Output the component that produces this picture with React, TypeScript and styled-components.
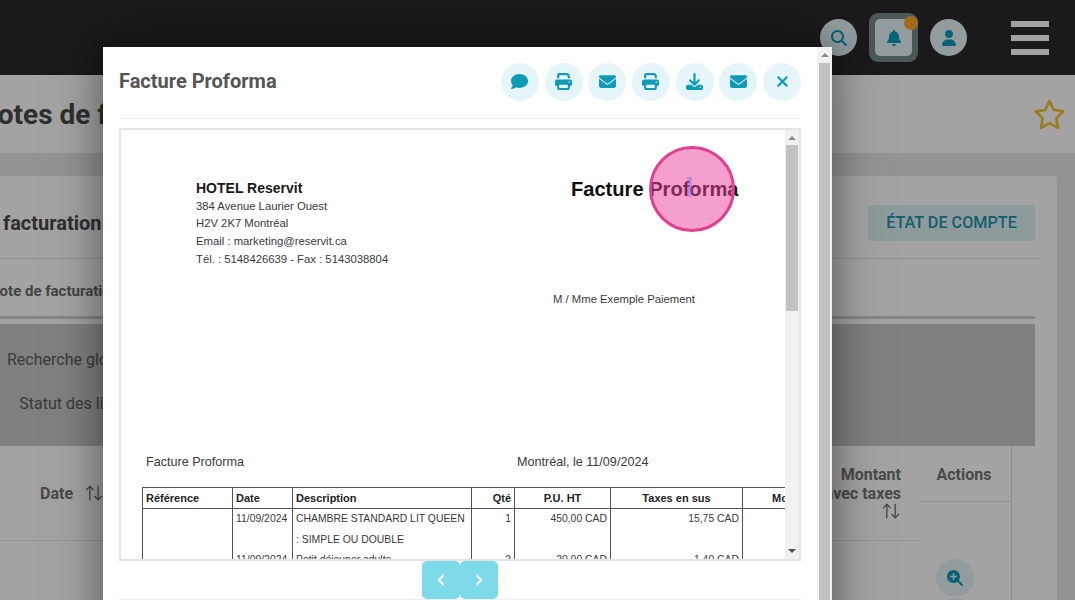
import React from "react";
import styled, { createGlobalStyle } from "styled-components";
import {
  FaBell,
  FaComment,
  FaDownload,
  FaEnvelope,
  FaMagnifyingGlass,
  FaMagnifyingGlassPlus,
  FaPrint,
  FaRegStar,
  FaUser,
  FaXmark,
} from "react-icons/fa6";
import { ArrowUpDown, ChevronLeft, ChevronRight } from "lucide-react";

const GlobalStyle = createGlobalStyle`
  html, body {
    margin: 0;
    padding: 0;
    overflow: hidden;
    font-family: Roboto, "Liberation Sans", sans-serif;
  }
  * {
    box-sizing: border-box;
  }
`;

const Screen = styled.div`
  position: relative;
  width: 1075px;
  height: 600px;
  overflow: hidden;
  background: #e6e6e6;
`;

/* page behind the modal */
const TopBar = styled.header`
  height: 75px;
  background: #292929;
  display: flex;
  align-items: center;
  justify-content: flex-end;
  padding-right: 26px;
`;

const TopCircle = styled.div`
  width: 37px;
  height: 37px;
  border-radius: 50%;
  background: #e6f6f9;
  color: #0f9ab8;
  display: flex;
  align-items: center;
  justify-content: center;
  font-size: 16px;
`;

const BellFrame = styled.div`
  position: relative;
  width: 49px;
  height: 49px;
  margin: 0 12px;
  padding: 6px;
  border-radius: 9px;
  background: #78898d;
`;

const BellInner = styled.div`
  width: 37px;
  height: 37px;
  border-radius: 5px;
  background: #e6f6f9;
  color: #0f9ab8;
  display: flex;
  align-items: center;
  justify-content: center;
  font-size: 16px;
`;

const BellDot = styled.span`
  position: absolute;
  top: 3px;
  right: 0;
  width: 14px;
  height: 14px;
  border-radius: 50%;
  background: #fbaa25;
`;

const Burger = styled.div`
  width: 38px;
  margin-left: 44px;
  display: flex;
  flex-direction: column;
  gap: 8px;
`;

const BurgerBar = styled.span`
  height: 6px;
  background: #ffffff;
`;

const TitleBand = styled.div`
  height: 78px;
  background: #ffffff;
  display: flex;
  align-items: center;
  justify-content: space-between;
  padding: 0 9px 0 0;
  margin-left: -22px;
`;

const PageTitle = styled.h1`
  margin: 0;
  font-size: 28px;
  font-weight: 700;
  color: #4a4a4a;
`;

const Star = styled.div`
  color: #f2c230;
  font-size: 33px;
  display: flex;
`;

const Card = styled.section`
  width: 1147px;
  margin: 23px 0 0 -90px;
  background: #ffffff;
  padding-right: 22px;
  border-radius: 4px;
`;

const CardHead = styled.div`
  height: 83px;
  margin-right: -5px;
  padding: 11px 5px 0 18px;
  display: flex;
  align-items: center;
  justify-content: space-between;
  border-bottom: 1px solid #e4e4e4;
`;

const CardTitle = styled.h2`
  margin: 0;
  font-size: 20px;
  font-weight: 700;
  color: #4a4a4a;
`;

const AccountButton = styled.div`
  width: 167px;
  height: 36px;
  border-radius: 4px;
  background: #dff3f6;
  color: #1f93ab;
  font-size: 16.2px;
  font-weight: 500;
  display: flex;
  align-items: center;
  justify-content: center;
`;

const TabRow = styled.div`
  height: 60px;
  padding: 23px 0 0 79px;
  font-size: 15px;
  font-weight: 700;
  color: #6a6a6a;
  border-bottom: 3px solid #d2d2d2;
`;

const FilterPanel = styled.div`
  height: 122px;
  margin-top: 5px;
  background: #c8c8c8;
  padding: 18px 0 0 58px;
  display: flex;
  flex-direction: column;
  gap: 8px;
`;

const FilterLabel = styled.div`
  width: 170px;
  height: 36px;
  line-height: 36px;
  font-size: 16px;
  color: #5c5c5c;
  text-align: right;
`;

const TableArea = styled.div`
  width: 1102px;
  height: 160px;
  display: flex;
  border-right: 1px solid #e0e0e0;
`;

const MainColumn = styled.div`
  flex: 1;
`;

const HeaderRow = styled.div`
  height: 95px;
  padding: 19px 19px 0 130px;
  display: flex;
  justify-content: space-between;
  border-bottom: 1px solid #e4e4e4;
`;

const SortLabel = styled.div`
  display: flex;
  align-items: center;
  gap: 11px;
  height: 56px;
  font-size: 16px;
  font-weight: 700;
  color: #737373;
`;

const AmountHead = styled.div`
  width: 90px;
  display: flex;
  flex-direction: column;
  align-items: flex-end;
  text-align: right;
  font-size: 16px;
  line-height: 19px;
  font-weight: 700;
  color: #737373;

  svg {
    margin-top: -2px;
  }
`;

const SortIcon = styled(ArrowUpDown)`
  color: #737373;
`;

const ActionsColumn = styled.div`
  width: 91px;
  display: flex;
  flex-direction: column;
`;

const ActionsHead = styled.div`
  flex: none;
  height: 56px;
  padding: 19px 3px 0 0;
  text-align: center;
  font-size: 16px;
  font-weight: 700;
  color: #737373;
  border-bottom: 1px solid #e4e4e4;
`;

const ActionsBody = styled.div`
  flex: none;
  padding: 57px 22px 0 0;
  display: flex;
  flex-direction: column;
  align-items: center;
  gap: 1px;
`;

const ZoomCircle = styled.div`
  flex: none;
  width: 38px;
  height: 38px;
  border-radius: 50%;
  background: #e5f5f8;
  color: #0f9ab8;
  display: flex;
  align-items: center;
  justify-content: center;
  font-size: 16px;
`;

const Backdrop = styled.div`
  position: absolute;
  inset: 0;
  background: rgba(0, 0, 0, 0.36);
`;

/* modal */
const Modal = styled.div`
  position: absolute;
  left: 103px;
  top: 47px;
  width: 729px;
  height: 620px;
  background: #ffffff;
  display: flex;
  box-shadow: 0 0 45px rgba(0, 0, 0, 0.5);
`;

const ModalBody = styled.div`
  flex: 1;
  min-width: 0;
  padding: 0 16px;
`;

const ModalHead = styled.div`
  height: 72px;
  display: flex;
  align-items: center;
  justify-content: space-between;
  padding: 0 0 2px;
  border-bottom: 1px solid #eeeeee;
`;

const ModalTitle = styled.h3`
  margin: -2px 0 0;
  font-size: 20px;
  font-weight: 700;
  color: #555555;
`;

const IconBar = styled.div`
  display: flex;
  gap: 5.7px;
`;

const IconButton = styled.div`
  width: 38px;
  height: 38px;
  border-radius: 50%;
  background: #e5f5f8;
  color: #0f9ab8;
  display: flex;
  align-items: center;
  justify-content: center;
  font-size: 17px;
`;

const Frame = styled.div`
  margin-top: 9px;
  height: 433px;
  border: 2px solid #e4e4e4;
  display: flex;
`;

const PdfView = styled.div`
  position: relative;
  flex: 1;
  min-width: 0;
  overflow: hidden;
  padding-top: 50px;
  font-family: "Liberation Sans", Arial, sans-serif;
  color: #3a3a3a;
  background: #ffffff;
`;

const PdfTop = styled.div`
  display: flex;
  padding-left: 75px;
`;

const Sender = styled.div`
  width: 375px;
  font-size: 11.3px;
  line-height: 17.7px;
`;

const SenderName = styled.div`
  font-size: 14px;
  font-weight: 700;
  color: #1a1a1a;
`;

const DocTitle = styled.div`
  margin-top: -1px;
  font-size: 20.1px;
  line-height: 20px;
  font-weight: 700;
  color: #111111;
`;

const Recipient = styled.div`
  margin: 21px 0 0 432px;
  font-size: 11.3px;
  line-height: 18px;
  white-space: nowrap;
`;

const DocLine = styled.div`
  margin-top: 145px;
  padding-left: 25px;
  display: flex;
  font-size: 12.6px;
  line-height: 18px;
`;

const DocLineLeft = styled.span`
  width: 371px;
`;

const PdfTable = styled.table`
  margin: 16px 0 0 21px;
  width: 702px;
  table-layout: fixed;
  border-collapse: collapse;
  font-size: 10.4px;
  border-top: 1px solid #555555;
`;

const Th = styled.th<{ $align?: string }>`
  height: 21px;
  padding: 0 3px;
  font-size: 11px;
  text-align: ${(p) => p.$align || "left"};
  color: #222222;
  border: 1px solid #555555;
`;

const Td = styled.td<{ $align?: string }>`
  padding: 0 3px;
  height: 21px;
  line-height: 20px;
  vertical-align: top;
  white-space: nowrap;
  text-align: ${(p) => p.$align || "left"};
  border-left: 1px solid #555555;
  border-right: 1px solid #555555;
`;

const DescLine = styled.div`
  line-height: 21px;

  &:first-child {
    margin-top: -1px;
  }
`;

const Cursor = styled.div`
  position: absolute;
  left: 35px;
  top: 28px;
  width: 5px;
  height: 20px;
  background: rgba(140, 110, 230, 0.45);
`;

const ClickMark = styled.div`
  position: absolute;
  left: 528px;
  top: 16px;
  width: 86px;
  height: 86px;
  border-radius: 50%;
  border: 3px solid #e0408f;
  background: rgba(236, 64, 153, 0.5);
`;

const Scroll = styled.div<{ $width: number; $inset: number; $thumbTop: number; $thumbHeight?: number }>`
  position: relative;
  flex: none;
  width: ${(p) => p.$width}px;
  background: #f1f1f1;

  &::after {
    content: "";
    position: absolute;
    left: ${(p) => p.$inset}px;
    right: ${(p) => p.$inset}px;
    top: ${(p) => p.$thumbTop}px;
    ${(p) => (p.$thumbHeight ? `height: ${p.$thumbHeight}px;` : "bottom: 0;")}
    background: #c1c1c1;
  }
`;

const ArrowUp = styled.span`
  position: absolute;
  top: 6px;
  left: 50%;
  margin-left: -4px;
  border-left: 4px solid transparent;
  border-right: 4px solid transparent;
  border-bottom: 4px solid #8a8a8a;
`;

const ArrowDown = styled.span`
  position: absolute;
  bottom: 6px;
  left: 50%;
  margin-left: -4px;
  border-left: 4px solid transparent;
  border-right: 4px solid transparent;
  border-top: 4px solid #505050;
`;

const Pager = styled.div`
  height: 39px;
  display: flex;
  justify-content: center;
  border-bottom: 1px solid #eeeeee;
`;

const PagerButton = styled.div`
  width: 38px;
  height: 38px;
  border-radius: 5px;
  background: #7ddae8;
  color: #ffffff;
  display: flex;
  align-items: center;
  justify-content: center;
`;

const App: React.FC = () => {
  return (
    <Screen>
      <GlobalStyle />
      <TopBar>
        <TopCircle>
          <FaMagnifyingGlass />
        </TopCircle>
        <BellFrame>
          <BellInner>
            <FaBell />
          </BellInner>
          <BellDot />
        </BellFrame>
        <TopCircle>
          <FaUser />
        </TopCircle>
        <Burger>
          <BurgerBar />
          <BurgerBar />
          <BurgerBar />
        </Burger>
      </TopBar>

      <TitleBand>
        <PageTitle>Notes de facturation</PageTitle>
        <Star>
          <FaRegStar />
        </Star>
      </TitleBand>

      <Card>
        <CardHead>
          <CardTitle>Note de facturation</CardTitle>
          <AccountButton>ÉTAT DE COMPTE</AccountButton>
        </CardHead>
        <TabRow>Note de facturation</TabRow>
        <FilterPanel>
          <FilterLabel>Recherche globale</FilterLabel>
          <FilterLabel>Statut des lignes</FilterLabel>
        </FilterPanel>
        <TableArea>
          <MainColumn>
            <HeaderRow>
              <SortLabel>
                Date <SortIcon size={20} strokeWidth={1.6} />
              </SortLabel>
              <AmountHead>
                Montant avec taxes
                <SortIcon size={20} strokeWidth={1.6} />
              </AmountHead>
            </HeaderRow>
          </MainColumn>
          <ActionsColumn>
            <ActionsHead>Actions</ActionsHead>
            <ActionsBody>
              <ZoomCircle>
                <FaMagnifyingGlassPlus />
              </ZoomCircle>
              <ZoomCircle />
            </ActionsBody>
          </ActionsColumn>
        </TableArea>
      </Card>

      <Backdrop />

      <Modal>
        <ModalBody>
          <ModalHead>
            <ModalTitle>Facture Proforma</ModalTitle>
            <IconBar>
              <IconButton>
                <FaComment />
              </IconButton>
              <IconButton>
                <FaPrint />
              </IconButton>
              <IconButton>
                <FaEnvelope />
              </IconButton>
              <IconButton>
                <FaPrint />
              </IconButton>
              <IconButton>
                <FaDownload />
              </IconButton>
              <IconButton>
                <FaEnvelope />
              </IconButton>
              <IconButton>
                <FaXmark />
              </IconButton>
            </IconBar>
          </ModalHead>

          <Frame>
            <PdfView>
              <PdfTop>
                <Sender>
                  <SenderName>HOTEL Reservit</SenderName>
                  <div>384 Avenue Laurier Ouest</div>
                  <div>H2V 2K7 Montréal</div>
                  <div>Email : marketing@reservit.ca</div>
                  <div>Tél. : 5148426639 - Fax : 5143038804</div>
                </Sender>
                <DocTitle>Facture Proforma</DocTitle>
              </PdfTop>
              <Recipient>M / Mme Exemple Paiement</Recipient>
              <DocLine>
                <DocLineLeft>Facture Proforma</DocLineLeft>
                <span>Montréal, le 11/09/2024</span>
              </DocLine>
              <PdfTable>
                <colgroup>
                  <col width="90" />
                  <col width="60" />
                  <col width="179" />
                  <col width="43" />
                  <col width="96" />
                  <col width="132" />
                  <col width="102" />
                </colgroup>
                <thead>
                  <tr>
                    <Th>Référence</Th>
                    <Th>Date</Th>
                    <Th>Description</Th>
                    <Th $align="right">Qté</Th>
                    <Th $align="center">P.U. HT</Th>
                    <Th $align="center">Taxes en sus</Th>
                    <Th $align="center">Montant</Th>
                  </tr>
                </thead>
                <tbody>
                  <tr>
                    <Td />
                    <Td>11/09/2024</Td>
                    <Td>
                      <DescLine>CHAMBRE STANDARD LIT QUEEN</DescLine>
                      <DescLine>: SIMPLE OU DOUBLE</DescLine>
                    </Td>
                    <Td $align="right">1</Td>
                    <Td $align="right">450,00 CAD</Td>
                    <Td $align="right">15,75 CAD</Td>
                    <Td />
                  </tr>
                  <tr>
                    <Td />
                    <Td>11/09/2024</Td>
                    <Td>Petit déjeuner adulte</Td>
                    <Td $align="right">2</Td>
                    <Td $align="right">20,00 CAD</Td>
                    <Td $align="right">1,40 CAD</Td>
                    <Td />
                  </tr>
                </tbody>
              </PdfTable>
              <ClickMark>
                <Cursor />
              </ClickMark>
            </PdfView>
            <Scroll $width={14} $inset={1} $thumbTop={15} $thumbHeight={166}>
              <ArrowUp />
              <ArrowDown />
            </Scroll>
          </Frame>

          <Pager>
            <PagerButton>
              <ChevronLeft size={18} strokeWidth={2.5} />
            </PagerButton>
            <PagerButton>
              <ChevronRight size={18} strokeWidth={2.5} />
            </PagerButton>
          </Pager>
        </ModalBody>
        <Scroll $width={15} $inset={2} $thumbTop={16}>
          <ArrowUp />
        </Scroll>
      </Modal>
    </Screen>
  );
};

export default App;
